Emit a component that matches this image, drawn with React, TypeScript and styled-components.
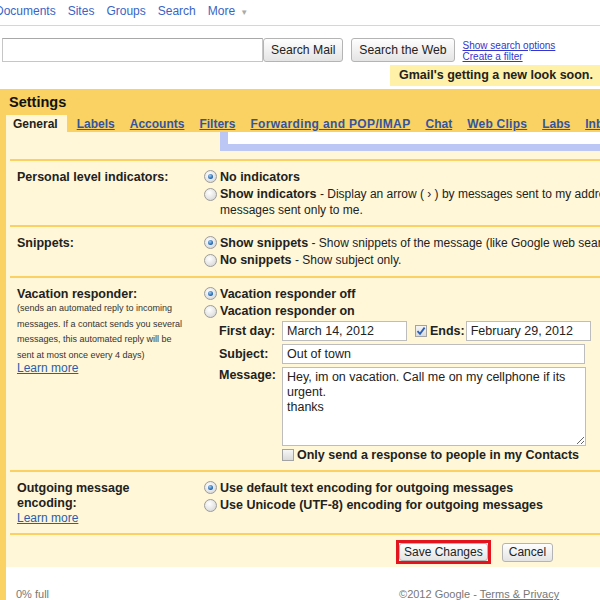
import React from "react";
import styled, { createGlobalStyle, css } from "styled-components";

const ORANGE = "#fad163";
const CREAM = "#fff7d7";

const GlobalStyle = createGlobalStyle`
  html, body {
    margin: 0;
    padding: 0;
    background: #fff;
  }
  body {
    font-family: "Liberation Sans", Arial, sans-serif;
    font-size: 12.5px;
    color: #222;
    overflow: hidden;
  }
  * {
    box-sizing: border-box;
  }
`;

const Viewport = styled.div`
  width: 600px;
  height: 600px;
  overflow: hidden;
`;

// wider than the window, the right side is cut like in the screenshot
const Page = styled.div`
  width: 780px;
`;

const TopNav = styled.nav`
  display: flex;
  gap: 12px;
  height: 26px;
  padding-top: 3px;
  margin-left: -5px;
  border-bottom: 1px solid #c9d7f1;
  font-size: 12px;
  line-height: 16px;
`;

const NavLink = styled.a`
  color: #3a63c4;
  text-decoration: none;
`;

const NavArrow = styled.span`
  margin-left: 5px;
  color: #aaa;
  font-size: 8px;
`;

const SearchRow = styled.div`
  display: flex;
  align-items: flex-start;
  margin-top: 12px;
  padding-left: 2px;
`;

const SearchInput = styled.input`
  width: 261px;
  height: 24px;
  border: 1px solid #c6c6c6;
  border-top-color: #a8a8a8;
  background: #fff;
`;

const Button = styled.button<{ $h?: number; $gap?: number; $px?: number }>`
  height: ${(p) => p.$h ?? 24}px;
  margin-left: ${(p) => p.$gap ?? 0}px;
  padding: 0 ${(p) => p.$px ?? 7}px;
  font-family: inherit;
  font-size: ${(p) => ((p.$h ?? 24) < 22 ? 12 : 12.2)}px;
  line-height: 1;
  color: #222;
  background: linear-gradient(#fefefe, #e4e4e4);
  border: 1px solid #b4b4b4;
  border-radius: 3px;
`;

const SearchLinks = styled.div`
  display: flex;
  flex-direction: column;
  margin: 1.5px 0 0 8px;
  font-size: 10px;
  line-height: 11px;
`;

const SmallLink = styled.a`
  color: #3535cc;
  text-decoration: underline;
`;

const NoticeRow = styled.div`
  display: flex;
  margin-top: 3px;
  padding-left: 390px;
`;

const Notice = styled.div`
  height: 21px;
  padding: 0 9px;
  background: #fff1a8;
  font-weight: bold;
  line-height: 21px;
`;

const Panel = styled.div`
  margin-top: 3px;
  border-left: 6px solid ${ORANGE};
`;

const PanelHeader = styled.div`
  background: ${ORANGE};
`;

const Title = styled.h1`
  margin: 0;
  padding-left: 3px;
  height: 26px;
  font-size: 14.5px;
  line-height: 26px;
  color: #111;
`;

const Tabs = styled.div`
  display: flex;
  gap: 1px;
  height: 17px;
`;

const Tab = styled.a<{ $active?: boolean; $spread?: number }>`
  padding: 0 7px;
  font-size: 12px;
  font-weight: bold;
  line-height: 19px;
  letter-spacing: ${(p) => p.$spread ?? 0}px;
  white-space: nowrap;
  color: #34559b;
  text-decoration: underline;
  ${(p) =>
    p.$active &&
    css`
      padding-right: 9px;
      margin-right: 2px;
      background: ${CREAM};
      color: #222;
      text-decoration: none;
    `}
`;

const Content = styled.div`
  background: ${CREAM};
  padding-left: 4px;
`;

const Dropdown = styled.div`
  height: 19px;
  margin: 0 0 8px 210px;
  background: #fff;
  border-left: 8px solid #bcc7f6;
  border-bottom: 7px solid #bcc7f6;
`;

const Section = styled.div<{ $pb?: number }>`
  display: grid;
  grid-template-columns: 187px 1fr;
  padding: 7px 0 ${(p) => p.$pb ?? 7}px 7px;
  border-top: 2px solid ${ORANGE};
`;

const SectionLabel = styled.div<{ $lh?: number; $mt?: number }>`
  padding-top: ${(p) => p.$mt ?? 1}px;
  font-weight: bold;
  line-height: ${(p) => p.$lh ?? 17.5}px;
  color: #222;
`;

const Hint = styled.div`
  margin-top: -2.5px;
  font-size: 9px;
  line-height: 15.5px;
  color: #333;
`;

const LearnMore = styled.a<{ $mt?: number; $lh?: number }>`
  display: block;
  margin-top: ${(p) => p.$mt ?? 0}px;
  font-size: 12px;
  line-height: ${(p) => p.$lh ?? 14}px;
  color: #2a5db0;
  text-decoration: underline;
`;

const Options = styled.div`
  display: flex;
  flex-direction: column;
`;

const Option = styled.div`
  display: flex;
  align-items: center;
  height: 17.5px;
  font-weight: bold;
  white-space: nowrap;
`;

const Desc = styled.span`
  font-weight: normal;
  font-size: 12px;
`;

const OptionNote = styled.div`
  padding-left: 16px;
  font-size: 12px;
  line-height: 15px;
`;

const Radio = styled.span<{ $checked?: boolean }>`
  flex: none;
  position: relative;
  width: 13px;
  height: 13px;
  margin-right: 3px;
  border-radius: 50%;
  border: 1px solid #9c9c9c;
  background: radial-gradient(circle at 40% 35%, #fff 0%, #e6e6e6 55%, #cdcdcd 100%);
  ${(p) =>
    p.$checked &&
    css`
      &::after {
        content: "";
        position: absolute;
        left: 3px;
        top: 3px;
        width: 5px;
        height: 5px;
        border-radius: 50%;
        background: radial-gradient(circle at 40% 35%, #9fd0f5, #1a5ca6 70%);
      }
    `}
`;

const Checkbox = styled.span<{ $gap?: number }>`
  flex: none;
  display: inline-flex;
  align-items: center;
  justify-content: center;
  width: 12px;
  height: 12px;
  margin-left: ${(p) => p.$gap ?? 0}px;
  border: 1px solid #a3a3a3;
  background: linear-gradient(#f6f6f6, #dadada);
`;

const VacationForm = styled.div`
  display: flex;
  flex-direction: column;
  gap: 3px;
  margin: 1px 0 0 15px;
`;

const FieldRow = styled.div<{ $top?: boolean }>`
  display: flex;
  align-items: ${(p) => (p.$top ? "flex-start" : "center")};
`;

const FieldLabel = styled.span<{ $w?: number; $gap?: number }>`
  width: ${(p) => (p.$w ? `${p.$w}px` : "auto")};
  margin-left: ${(p) => p.$gap ?? 0}px;
  font-weight: bold;
  line-height: 16px;
  white-space: nowrap;
`;

const TextField = styled.input<{ $w: number; $gap?: number }>`
  width: ${(p) => p.$w}px;
  height: 20px;
  margin-left: ${(p) => p.$gap ?? 0}px;
  padding: 0 4px;
  border: 1px solid #bdbdbd;
  background: #fff;
  font-family: inherit;
  font-size: 12.5px;
  color: #222;
`;

const TextArea = styled.textarea`
  width: 304px;
  height: 79px;
  padding: 2px 4px;
  border: 1px solid #bdbdbd;
  background: #fff;
  font-family: inherit;
  font-size: 12.5px;
  line-height: 15px;
  color: #222;
`;

const ContactsRow = styled.div`
  display: flex;
  align-items: center;
  height: 18px;
  margin-left: 78px;
  font-weight: bold;
  white-space: nowrap;
  gap: 3px;
`;

const ButtonsRow = styled.div`
  display: flex;
  align-items: center;
  padding: 5px 0 3px 386px;
  border-top: 2px solid ${ORANGE};
`;

const Highlight = styled.div`
  border: 3px solid #e3141d;
  display: flex;
`;

const Footer = styled.div`
  display: flex;
  padding: 21px 0 0 10px;
  height: 33px;
  background: #fff;
  font-size: 11px;
  line-height: 13px;
  color: #777;
`;

const Copyright = styled.div`
  margin-left: 350px;
`;

const FooterLink = styled.a`
  color: #777;
  text-decoration: underline;
`;

function Check() {
  return (
    <svg width="10" height="10" viewBox="0 0 10 10">
      <path d="M1.5 5.2 L4 7.8 L8.6 1.6" fill="none" stroke="#2b5fb3" strokeWidth="1.8" />
    </svg>
  );
}

export default function App() {
  return (
    <Viewport>
      <GlobalStyle />
      <Page>
        <TopNav>
          <NavLink>Documents</NavLink>
          <NavLink>Sites</NavLink>
          <NavLink>Groups</NavLink>
          <NavLink>Search</NavLink>
          <NavLink>
            More<NavArrow>▼</NavArrow>
          </NavLink>
        </TopNav>

        <SearchRow>
          <SearchInput />
          <Button>Search Mail</Button>
          <Button $gap={8}>Search the Web</Button>
          <SearchLinks>
            <SmallLink>Show search options</SmallLink>
            <SmallLink>Create a filter</SmallLink>
          </SearchLinks>
        </SearchRow>

        <NoticeRow>
          <Notice>Gmail's getting a new look soon.</Notice>
        </NoticeRow>

        <Panel>
          <PanelHeader>
            <Title>Settings</Title>
            <Tabs>
              <Tab $active>General</Tab>
              <Tab>Labels</Tab>
              <Tab>Accounts</Tab>
              <Tab>Filters</Tab>
              <Tab $spread={0.35}>Forwarding and POP/IMAP</Tab>
              <Tab>Chat</Tab>
              <Tab $spread={0.25}>Web Clips</Tab>
              <Tab>Labs</Tab>
              <Tab>Inbox</Tab>
              <Tab>Offline</Tab>
            </Tabs>
          </PanelHeader>

          <Content>
            <Dropdown />

            <Section>
              <SectionLabel>Personal level indicators:</SectionLabel>
              <Options>
                <Option>
                  <Radio $checked />
                  No indicators
                </Option>
                <Option>
                  <Radio />
                  Show indicators
                  <Desc>
                    &nbsp;- Display an arrow ( › ) by messages sent to my address (not a mailing list),
                    and a double arrow ( » ) by
                  </Desc>
                </Option>
                <OptionNote>messages sent only to me.</OptionNote>
              </Options>
            </Section>

            <Section>
              <SectionLabel>Snippets:</SectionLabel>
              <Options>
                <Option>
                  <Radio $checked />
                  Show snippets
                  <Desc>&nbsp;- Show snippets of the message (like Google web search!).</Desc>
                </Option>
                <Option>
                  <Radio />
                  No snippets
                  <Desc>&nbsp;- Show subject only.</Desc>
                </Option>
              </Options>
            </Section>

            <Section $pb={6}>
              <div>
                <SectionLabel>Vacation responder:</SectionLabel>
                <Hint>
                  (sends an automated reply to incoming
                  <br />
                  messages. If a contact sends you several
                  <br />
                  messages, this automated reply will be
                  <br />
                  sent at most once every 4 days)
                </Hint>
                <LearnMore $mt={-2}>Learn more</LearnMore>
              </div>
              <Options>
                <Option>
                  <Radio $checked />
                  Vacation responder off
                </Option>
                <Option>
                  <Radio />
                  Vacation responder on
                </Option>
                <VacationForm>
                  <FieldRow>
                    <FieldLabel $w={63}>First day:</FieldLabel>
                    <TextField $w={125} defaultValue="March 14, 2012" />
                    <Checkbox $gap={8}>
                      <Check />
                    </Checkbox>
                    <FieldLabel $gap={3}>Ends:</FieldLabel>
                    <TextField $w={125} $gap={1} defaultValue="February 29, 2012" />
                  </FieldRow>
                  <FieldRow>
                    <FieldLabel $w={63}>Subject:</FieldLabel>
                    <TextField $w={303} defaultValue="Out of town" />
                  </FieldRow>
                  <FieldRow $top>
                    <FieldLabel $w={63}>Message:</FieldLabel>
                    <TextArea
                      defaultValue={"Hey, im on vacation. Call me on my cellphone if its urgent.\nthanks"}
                    />
                  </FieldRow>
                </VacationForm>
                <ContactsRow>
                  <Checkbox />
                  Only send a response to people in my Contacts
                </ContactsRow>
              </Options>
            </Section>

            <Section>
              <div>
                <SectionLabel $lh={15} $mt={2}>
                  Outgoing message
                  <br />
                  encoding:
                </SectionLabel>
                <LearnMore $lh={15}>Learn more</LearnMore>
              </div>
              <Options>
                <Option>
                  <Radio $checked />
                  Use default text encoding for outgoing messages
                </Option>
                <Option>
                  <Radio />
                  Use Unicode (UTF-8) encoding for outgoing messages
                </Option>
              </Options>
            </Section>

            <ButtonsRow>
              <Highlight>
                <Button $h={18} $px={4}>
                  Save Changes
                </Button>
              </Highlight>
              <Button $h={19} $gap={11} $px={6}>
                Cancel
              </Button>
            </ButtonsRow>
          </Content>

          <Footer>
            <div>0% full</div>
            <Copyright>
              ©2012 Google - <FooterLink>Terms &amp; Privacy</FooterLink>
            </Copyright>
          </Footer>
        </Panel>
      </Page>
    </Viewport>
  );
}
